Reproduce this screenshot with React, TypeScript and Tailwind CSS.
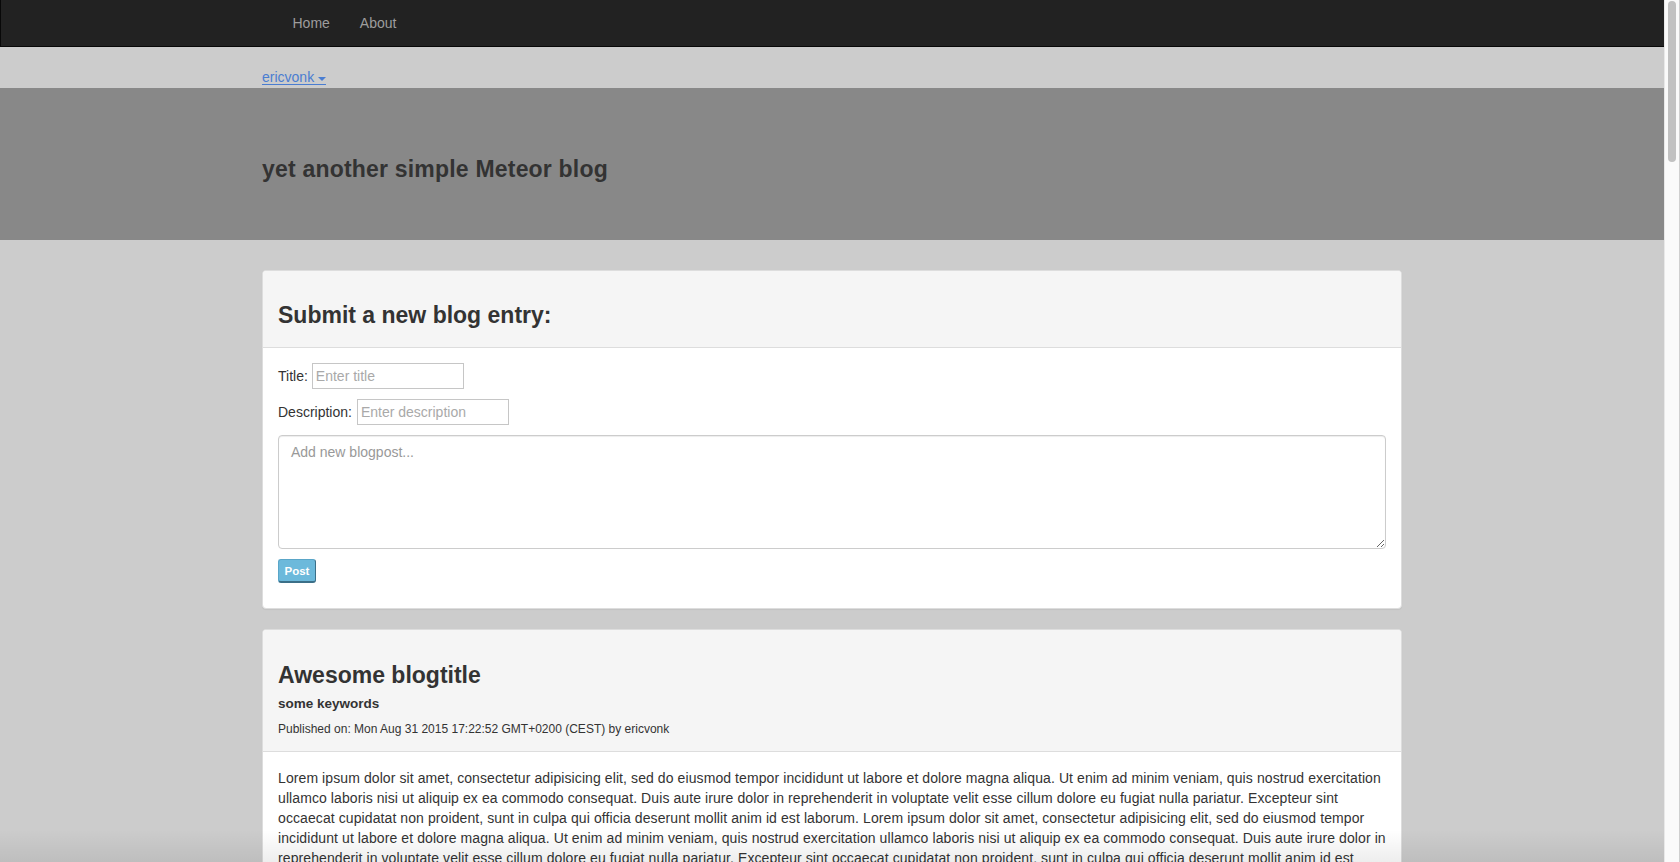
import React from "react";

const LOREM =
  "Lorem ipsum dolor sit amet, consectetur adipisicing elit, sed do eiusmod tempor incididunt ut labore et dolore magna aliqua. Ut enim ad minim veniam, quis nostrud exercitation ullamco laboris nisi ut aliquip ex ea commodo consequat. Duis aute irure dolor in reprehenderit in voluptate velit esse cillum dolore eu fugiat nulla pariatur. Excepteur sint occaecat cupidatat non proident, sunt in culpa qui officia deserunt mollit anim id est laborum.";

export default function App() {
  return (
    <div className="relative flex h-[862px] w-[1680px] overflow-hidden bg-[#cccccc] font-['Liberation_Sans',Arial,sans-serif] text-[#333333]">
      <div className="flex min-w-0 flex-1 flex-col">
        {/* Navbar */}
        <nav className="h-[47px] shrink-0 border-b border-l border-[#080808] bg-[#222222]">
          <div className="mx-auto flex h-full w-[1170px] items-center pl-[30px] text-[14px] leading-[20px] text-[#9d9d9d]">
            <a className="px-[15px]">Home</a>
            <a className="px-[15px]">About</a>
          </div>
        </nav>

        {/* User row */}
        <div className="h-[41px] shrink-0">
          <div className="mx-auto flex w-[1170px] items-start px-[15px] pt-[23px]">
            <a className="inline-flex items-center border-b border-[#4a7dd1] text-[14px] leading-[14px] text-[#4a7dd1]">
              ericvonk
              <span className="ml-[4px] mt-[4px] h-0 w-0 border-x-[4px] border-t-[4px] border-x-transparent border-t-[#4a7dd1]" />
            </a>
          </div>
        </div>

        {/* Header band */}
        <header className="h-[152px] shrink-0 bg-[#888888]">
          <div className="mx-auto w-[1170px] px-[15px] pt-[67px]">
            <h1 className="text-[23px] font-bold leading-[28px] tracking-[0.2px] text-[#333333]">
              yet another simple Meteor blog
            </h1>
          </div>
        </header>

        {/* Main */}
        <main className="mx-auto w-[1170px] px-[15px] pt-[30px]">
          {/* Submit card */}
          <section className="rounded-[4px] border border-[#dddddd] bg-white shadow-[0_1px_1px_rgba(0,0,0,0.05)]">
            <div className="rounded-t-[3px] border-b border-[#dddddd] bg-[#f5f5f5] px-[15px] pb-[18px] pt-[30px]">
              <h2 className="text-[23px] font-bold leading-[28px]">Submit a new blog entry:</h2>
            </div>
            <div className="px-[15px] pb-[25px] pt-[15px] text-[14px] leading-[20px]">
              <div className="flex items-center">
                <label>Title:</label>
                <input
                  placeholder="Enter title"
                  className="ml-[4px] h-[26px] w-[152px] border border-[#c6c6c6] bg-white px-[3px] text-[14px] outline-none placeholder:text-[#a9a9a9]"
                />
              </div>
              <div className="mt-[10px] flex items-center">
                <label>Description:</label>
                <input
                  placeholder="Enter description"
                  className="ml-[5px] h-[26px] w-[152px] border border-[#c6c6c6] bg-white px-[3px] text-[14px] outline-none placeholder:text-[#a9a9a9]"
                />
              </div>
              <textarea
                placeholder="Add new blogpost..."
                className="mt-[10px] block h-[114px] w-full rounded-[4px] border border-[#cccccc] bg-white px-[12px] py-[6px] text-[14px] leading-[20px] shadow-[inset_0_1px_1px_rgba(0,0,0,0.075)] outline-none placeholder:text-[#999999]"
              />
              <button className="mt-[10px] block h-[24px] w-[38px] rounded-[3px] border border-[#5aa6c8] border-b-2 border-r-[#3b6f88] border-b-[#3b6f88] bg-[#6cb9db] text-[11.5px] font-bold leading-[20px] text-white">
                Post
              </button>
            </div>
          </section>

          {/* Blog post card */}
          <section className="mt-[20px] rounded-[4px] border border-[#dddddd] bg-white shadow-[0_1px_1px_rgba(0,0,0,0.05)]">
            <div className="rounded-t-[3px] border-b border-[#dddddd] bg-[#f5f5f5] px-[15px] pb-[13px] pt-[31px]">
              <h2 className="text-[23px] font-bold leading-[28px]">Awesome blogtitle</h2>
              <h4 className="mt-[5px] text-[13.5px] font-bold leading-[20px]">some keywords</h4>
              <p className="mt-[7px] text-[12px] leading-[17px]">
                Published on: Mon Aug 31 2015 17:22:52 GMT+0200 (CEST) by ericvonk
              </p>
            </div>
            <div className="px-[15px] pb-[15px] pt-[16px] text-[14px] leading-[20px] tracking-[0.09px]">
              <p>
                {LOREM} {LOREM} {LOREM}
              </p>
            </div>
          </section>
        </main>
      </div>

      {/* Scrollbar */}
      <div className="flex w-[16px] shrink-0 border-l border-r border-l-[#e8e8e8] border-r-[#cfcfcf] bg-[#fafafa]">
        <div className="ml-[3px] mt-[1px] h-[161px] w-[8px] rounded-full bg-[#c1c1c1]" />
      </div>

      {/* Bottom window shadow */}
      <div className="pointer-events-none absolute bottom-0 left-0 right-[16px] h-[32px] bg-linear-to-b from-transparent to-black/[0.07]" />
    </div>
  );
}
